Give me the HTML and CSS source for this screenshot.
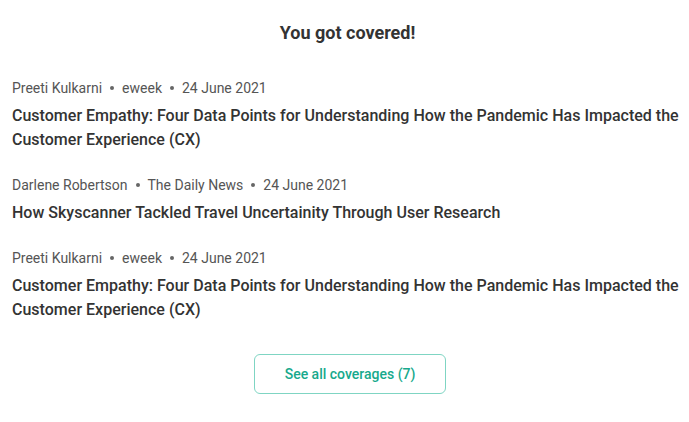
FILE: index.html
```html
<!DOCTYPE html>
<html>
<head>
<meta charset="utf-8">
<link rel="stylesheet" href="styles.css">
</head>
<body>
<section class="coverage">
  <h2 class="title">You got covered!</h2>
  <ul class="list">
    <li class="item">
      <div class="meta"><span>Preeti Kulkarni</span><span class="dot"></span><span>eweek</span><span class="dot"></span><span>24 June 2021</span></div>
      <a class="headline">Customer Empathy: Four Data Points for Understanding How the Pandemic Has Impacted the Customer Experience (CX)</a>
    </li>
    <li class="item">
      <div class="meta"><span>Darlene Robertson</span><span class="dot"></span><span>The Daily News</span><span class="dot"></span><span>24 June 2021</span></div>
      <a class="headline">How Skyscanner Tackled Travel Uncertainity Through User Research</a>
    </li>
    <li class="item">
      <div class="meta"><span>Preeti Kulkarni</span><span class="dot"></span><span>eweek</span><span class="dot"></span><span>24 June 2021</span></div>
      <a class="headline">Customer Empathy: Four Data Points for Understanding How the Pandemic Has Impacted the Customer Experience (CX)</a>
    </li>
  </ul>
  <div class="actions">
    <button class="more">See all coverages (7)</button>
  </div>
</section>
</body>
</html>
```
FILE: styles.css
```css
* { box-sizing: border-box; }
html, body { margin: 0; padding: 0; background: #fff; }
body { font-family: Roboto, "Noto Sans", sans-serif; color: #333; }
.coverage { padding: 21px 6px 0 12px; }
.title {
  margin: 0;
  text-align: center;
  font-size: 18px;
  line-height: 24px;
  font-weight: 700;
  color: #333;
}
.list { list-style: none; margin: 33px 0 0; padding: 0; display: flex; flex-direction: column; gap: 23px; }
.item { display: flex; flex-direction: column; gap: 6px; }
.meta {
  display: flex;
  align-items: center;
  font-size: 14px;
  line-height: 20px;
  color: #555;
}
.dot {
  width: 4px; height: 4px; border-radius: 50%;
  background: #666;
  margin: 0 8px;
}
.headline {
  font-size: 16px;
  line-height: 24px;
  font-weight: 500;
  letter-spacing: 0.01px;
  color: #333;
}
.actions { display: flex; justify-content: center; margin-top: 32px; padding-left: 5px; }
.more {
  width: 192px; height: 40px;
  border: 1px solid #7fd5c3;
  border-radius: 6px;
  background: #fff;
  color: #17a98c;
  font-family: Roboto, sans-serif;
  font-size: 14px;
  font-weight: 500;
}
```
